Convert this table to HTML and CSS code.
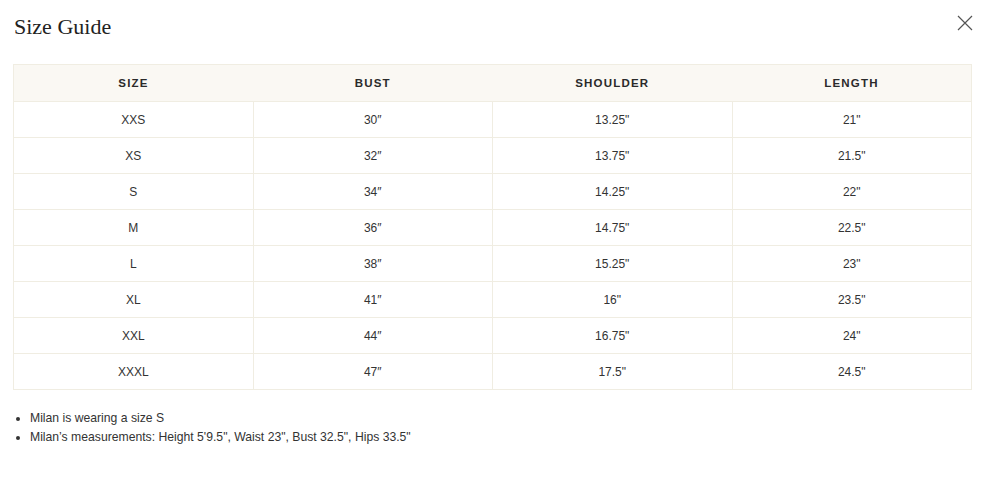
FILE: index.html
```html
<!DOCTYPE html>
<html>
<head>
<meta charset="utf-8">
<link rel="stylesheet" href="styles.css">
</head>
<body>
<div class="modal">
  <div class="head">
    <h2 class="title">Size Guide</h2>
    <button class="close" aria-label="Close">
      <svg width="16" height="16" viewBox="0 0 16 16"><path d="M1 1L15 15M15 1L1 15" stroke="#555" stroke-width="1.2" fill="none"/></svg>
    </button>
  </div>
  <table class="guide">
    <thead>
      <tr><th>SIZE</th><th>BUST</th><th>SHOULDER</th><th>LENGTH</th></tr>
    </thead>
    <tbody>
      <tr><td>XXS</td><td>30″</td><td>13.25"</td><td>21"</td></tr>
      <tr><td>XS</td><td>32″</td><td>13.75"</td><td>21.5"</td></tr>
      <tr><td>S</td><td>34″</td><td>14.25"</td><td>22"</td></tr>
      <tr><td>M</td><td>36″</td><td>14.75"</td><td>22.5"</td></tr>
      <tr><td>L</td><td>38″</td><td>15.25"</td><td>23"</td></tr>
      <tr><td>XL</td><td>41″</td><td>16"</td><td>23.5"</td></tr>
      <tr><td>XXL</td><td>44″</td><td>16.75"</td><td>24"</td></tr>
      <tr><td>XXXL</td><td>47″</td><td>17.5"</td><td>24.5"</td></tr>
    </tbody>
  </table>
  <ul class="notes">
    <li>Milan is wearing a size S</li>
    <li>Milan’s measurements: Height 5'9.5", Waist 23", Bust 32.5", Hips 33.5"</li>
  </ul>
</div>
</body>
</html>
```
FILE: styles.css
```css
html, body { margin: 0; padding: 0; background: #fff; }
body { font-family: "Liberation Sans", Arial, sans-serif; color: #333; }
.modal { padding: 0 10px 0 13px; }
.head { display: flex; justify-content: space-between; align-items: flex-start; height: 64px; }
.title { margin: 0; padding-top: 14px; padding-left: 1px; font-family: "Liberation Serif", serif; font-weight: normal; font-size: 22px; line-height: 26px; color: #222; }
.close { background: none; border: 0; padding: 0; margin: 15px -1px 0 0; width: 16px; height: 16px; cursor: pointer; }
.close svg { display: block; }
.guide { width: 959px; border-collapse: collapse; table-layout: fixed; border: 1px solid #f0ede2; }
.guide th { background: #faf8f3; font-size: 11.5px; font-weight: bold; letter-spacing: 1.2px; color: #2a2a2a; height: 36px; padding: 0; text-align: center; }
.guide td { font-size: 12px; color: #333; height: 35px; padding: 0; text-align: center; border-top: 1px solid #f0ede2; border-left: 1px solid #f0ede2; }
.guide td:first-child { border-left: 0; }
.notes { margin: 19px 0 0; padding-left: 17px; font-size: 12.2px; line-height: 19px; color: #333; }
```
